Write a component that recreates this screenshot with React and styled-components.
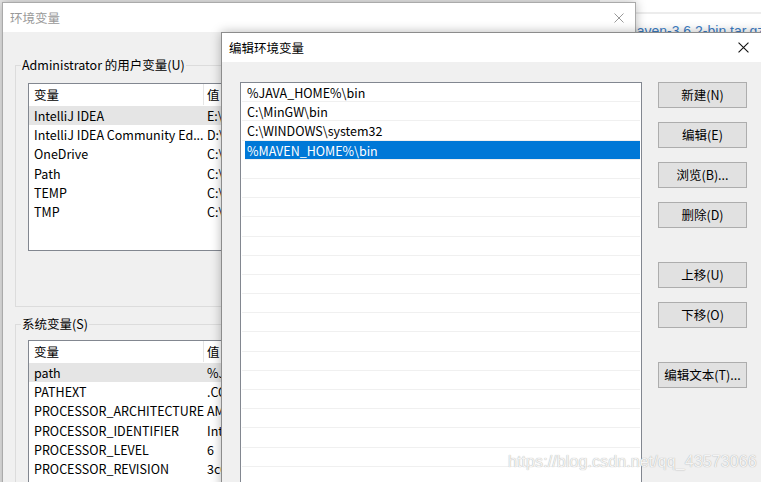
import React from "react";
import styled, { createGlobalStyle } from "styled-components";

const GlobalStyle = createGlobalStyle`
  html, body {
    margin: 0;
    padding: 0;
  }
  body {
    font-family: "Noto Sans CJK SC", "Noto Sans", sans-serif;
    font-size: 12.5px;
    color: #000;
  }
`;

const Desktop = styled.div`
  position: relative;
  width: 761px;
  height: 482px;
  overflow: hidden;
  background: #e9e9e9;
`;

const BrowserPage = styled.div`
  position: absolute;
  left: 600px;
  top: 0;
  right: 0;
  height: 60px;
  background: #fff;
  padding-left: 25px;
`;

const PageRule = styled.div`
  height: 2px;
  margin: 12px 0 0 -25px;
  background: #ececec;
`;

const PageLink = styled.div`
  margin-top: 9px;
  font-family: "Liberation Sans", Arial, sans-serif;
  font-size: 14px;
  line-height: 16px;
  color: #3b7cc4;
  white-space: nowrap;
`;

const Window = styled.div`
  position: absolute;
  left: ${p => p.$left}px;
  top: ${p => p.$top}px;
  width: ${p => p.$width}px;
  height: ${p => p.$height}px;
  background: #f0f0f0;
  border: 1px solid ${p => p.$border};
  box-shadow: 0 0 10px rgba(0, 0, 0, 0.28);
  display: flex;
  flex-direction: column;
  overflow: hidden;
`;

const TitleBar = styled.div`
  flex: 0 0 29px;
  display: flex;
  align-items: center;
  background: #fff;
  padding-left: 7px;
  color: ${p => (p.$active ? "#000" : "#999")};
  line-height: 18px;
`;

const TitleText = styled.span`
  flex: 1;
`;

const CloseBtn = styled.div`
  width: ${p => p.$width}px;
  height: 29px;
  display: flex;
  align-items: center;
  justify-content: center;
`;

const BackBody = styled.div`
  flex: 1;
  padding: 24px 12px 0 12px;
`;

const Group = styled.fieldset`
  margin: ${p => p.$gap}px 0 0 0;
  padding: ${p => p.$top}px 12px ${p => p.$bottom}px 12px;
  border: 1px solid #dcdcdc;
  min-width: 0;
`;

const Legend = styled.legend`
  margin-left: -7px;
  padding: 0 1px;
  line-height: 18px;
  font-size: 12.5px;
`;

const VarList = styled.div`
  height: ${p => p.$height}px;
  background: #fff;
  border: 1px solid #828790;
  overflow: hidden;
`;

const HeaderRow = styled.div`
  display: grid;
  grid-template-columns: 175px 1fr;
  height: 21px;
  line-height: 21px;
  margin-bottom: 1px;
`;

const HeaderCell = styled.div`
  padding-left: ${p => (p.$first ? 5 : 3)}px;
  border-right: ${p => (p.$first ? "1px solid #e5e5e5" : "none")};
`;

const VarRow = styled.div`
  display: grid;
  grid-template-columns: 175px 1fr;
  height: 19.2px;
  line-height: 19px;
  background: ${p => (p.$selected ? "#e5e5e5" : "transparent")};
  white-space: nowrap;
`;

const VarCell = styled.div`
  padding-left: ${p => (p.$first ? 5 : 3)}px;
  overflow: hidden;
`;

const FrontBody = styled.div`
  flex: 1;
  display: flex;
  gap: 16px;
  padding: 20px 0 0 18px;
  min-height: 0;
`;

const PathList = styled.div`
  flex: 0 0 402px;
  box-sizing: border-box;
  background: #fff;
  border: 1px solid #828790;
  padding: 0 1px;
  overflow: hidden;
`;

const PathRow = styled.div`
  box-sizing: border-box;
  height: 19.2px;
  line-height: 19px;
  border-bottom: 1px solid #f0f0f0;
  padding-left: ${p => (p.$selected ? 2 : 5)}px;
  margin-left: ${p => (p.$selected ? 3 : 0)}px;
  background: ${p => (p.$selected ? "#0078d7" : "transparent")};
  color: ${p => (p.$selected ? "#fff" : "#000")};
  white-space: nowrap;
`;

const ButtonColumn = styled.div`
  display: flex;
  flex-direction: column;
`;

const Button = styled.button`
  width: 89px;
  height: 26px;
  margin-top: ${p => p.$gap}px;
  padding: 0 0 1px;
  background: #e1e1e1;
  border: 1px solid #adadad;
  font-family: inherit;
  font-size: 12.5px;
  color: #000;
`;

const Watermark = styled.div`
  position: absolute;
  left: 508px;
  top: 453px;
  font-family: "Liberation Sans", Arial, sans-serif;
  font-size: 16px;
  letter-spacing: 0.1px;
  color: #f4f4f4;
  text-shadow: 0 0 1px #9a9a9a;
  white-space: nowrap;
`;

const CloseIcon = ({ color, size }) => (
  <svg width={size} height={size} viewBox="0 0 10 10">
    <path d="M0.5 0.5 L9.5 9.5 M9.5 0.5 L0.5 9.5" stroke={color} strokeWidth="1" fill="none" />
  </svg>
);

const userVars = [
  ["IntelliJ IDEA", "E:\\"],
  ["IntelliJ IDEA Community Ed...", "D:\\"],
  ["OneDrive", "C:\\"],
  ["Path", "C:\\"],
  ["TEMP", "C:\\"],
  ["TMP", "C:\\"]
];

const sysVars = [
  ["path", "%JAVA_HOME%"],
  ["PATHEXT", ".COM"],
  ["PROCESSOR_ARCHITECTURE", "AMD64"],
  ["PROCESSOR_IDENTIFIER", "Intel64"],
  ["PROCESSOR_LEVEL", "6"],
  ["PROCESSOR_REVISION", "3c03"]
];

const paths = ["%JAVA_HOME%\\bin", "C:\\MinGW\\bin", "C:\\WINDOWS\\system32", "%MAVEN_HOME%\\bin"];

const buttons = [
  ["新建(N)", 0],
  ["编辑(E)", 14],
  ["浏览(B)...", 14],
  ["删除(D)", 14],
  ["上移(U)", 34],
  ["下移(O)", 14],
  ["编辑文本(T)...", 34]
];

const VarTable = ({ rows, height }) => (
  <VarList $height={height}>
    <HeaderRow>
      <HeaderCell $first>变量</HeaderCell>
      <HeaderCell>值</HeaderCell>
    </HeaderRow>
    {rows.map(([name, value], i) => (
      <VarRow key={name} $selected={i === 0}>
        <VarCell $first>{name}</VarCell>
        <VarCell>{value}</VarCell>
      </VarRow>
    ))}
  </VarList>
);

export default function App() {
  const emptyRows = Array.from({ length: 20 });
  return (
    <>
      <GlobalStyle />
      <Desktop>
        <BrowserPage>
          <PageRule />
          <PageLink>maven-3.6.2-bin.tar.gz</PageLink>
        </BrowserPage>

        <Window $left={2} $top={2} $width={632} $height={500} $border="#aaaaaa">
          <TitleBar>
            <TitleText>环境变量</TitleText>
            <CloseBtn $width={32}>
              <CloseIcon color="#999" size={10} />
            </CloseBtn>
          </TitleBar>
          <BackBody>
            <Group $gap={0} $top={9} $bottom={55}>
              <Legend>Administrator 的用户变量(U)</Legend>
              <VarTable rows={userVars} height={166} />
            </Group>
            <Group $gap={8} $top={7} $bottom={40}>
              <Legend>系统变量(S)</Legend>
              <VarTable rows={sysVars} height={170} />
            </Group>
          </BackBody>
        </Window>

        <Window $left={221} $top={32} $width={544} $height={470} $border="#8c8c8c">
          <TitleBar $active>
            <TitleText>编辑环境变量</TitleText>
            <CloseBtn $width={46}>
              <CloseIcon color="#111" size={11} />
            </CloseBtn>
          </TitleBar>
          <FrontBody>
            <PathList>
              {paths.map((p, i) => (
                <PathRow key={p} $selected={i === 3}>
                  {p}
                </PathRow>
              ))}
              {emptyRows.map((_, i) => (
                <PathRow key={"e" + i} />
              ))}
            </PathList>
            <ButtonColumn>
              {buttons.map(([label, gap]) => (
                <Button key={label} $gap={gap}>
                  {label}
                </Button>
              ))}
            </ButtonColumn>
          </FrontBody>
        </Window>

        <Watermark>https://blog.csdn.net/qq_43573066</Watermark>
      </Desktop>
    </>
  );
}
